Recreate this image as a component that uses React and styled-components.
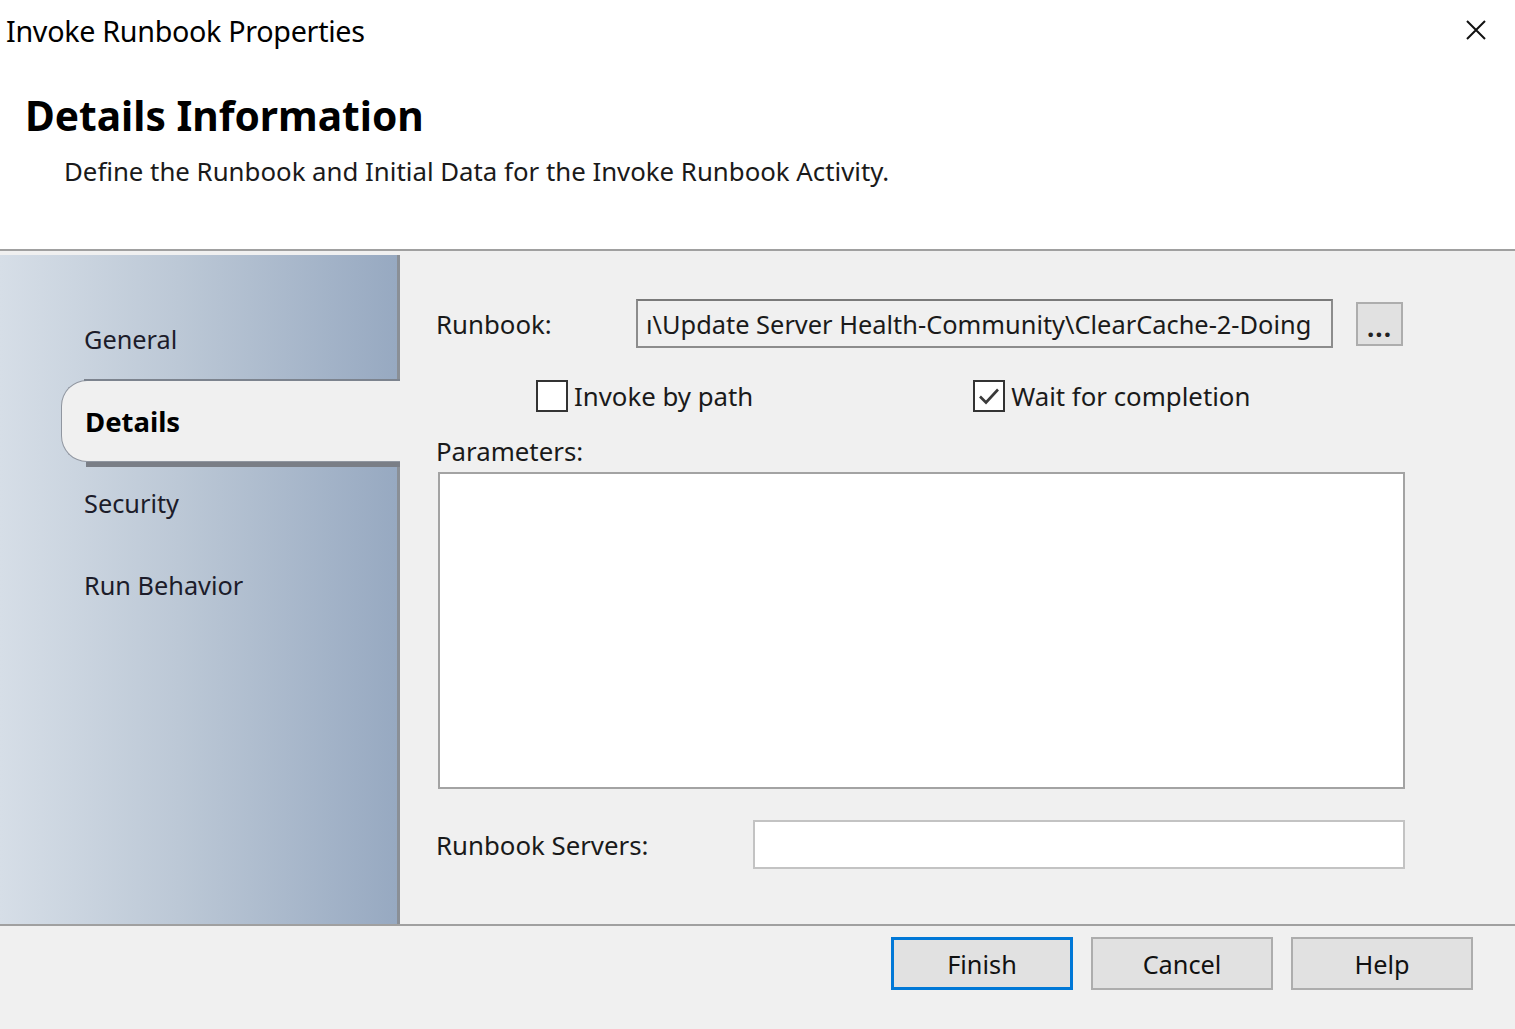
import React from "react";
import styled, { createGlobalStyle } from "styled-components";

const Global = createGlobalStyle`
  html, body { margin: 0; padding: 0; background: #f0f0f0; }
  body { font-family: "Noto Sans", "Open Sans", sans-serif; }
  * { box-sizing: border-box; }
`;

const Window = styled.div`
  width: 1515px;
  height: 1029px;
  display: flex;
  flex-direction: column;
  background: #f0f0f0;
  overflow: hidden;
`;

const TitleBar = styled.div`
  height: 66px;
  background: #fff;
  display: flex;
  align-items: flex-start;
  justify-content: space-between;
  padding: 11px 28px 0 6px;
`;

const TitleText = styled.div`
  font-family: "Noto Sans", "Open Sans", sans-serif;
  font-size: 28.7px;
  color: #000;
  letter-spacing: -0.3px;
`;

const CloseIcon = styled.svg`
  width: 22px;
  height: 22px;
  margin-top: 8px;
`;

const Header = styled.div`
  height: 185px;
  background: #fff;
  padding: 21px 0 0 25px;
  border-bottom: 2px solid #a0a0a0;
`;

const Heading = styled.h1`
  margin: 0;
  font-size: 40.7px;
  font-weight: bold;
  color: #000;
  line-height: 56px;
`;

const Subtitle = styled.div`
  margin: 10px 0 0 39px;
  font-size: 25.8px;
  color: #1a1a1a;
`;

const Main = styled.div`
  height: 675px;
  display: flex;
  padding-top: 4px;
  border-bottom: 2px solid #a0a0a0;
`;

const Sidebar = styled.nav`
  width: 400px;
  flex: none;
  background: linear-gradient(to right, #d6dee7 0%, #bcc8d6 45%, #97a9c1 100%);
  border-right: 3px solid #8a8f96;
  padding-top: 43px;
  display: flex;
  flex-direction: column;
`;

const Tab = styled.div`
  position: relative;
  height: 82px;
  display: flex;
  align-items: center;
  padding-left: ${(p) => (p.$active ? "23px" : "84px")};
  font-size: 25.3px;
  color: #1c1c2a;
  ${(p) =>
    p.$active
      ? `
    margin-left: 61px;
    margin-right: -3px;
    background: #f0f0f0;
    border: 1px solid #9096a0;
    border-right: none;
    border-radius: 26px 0 0 26px;
    font-size: 27.5px;
    font-weight: bold;
    color: #000;
    &::before {
      content: "";
      position: absolute;
      left: 22px;
      right: 0;
      top: -2px;
      height: 2px;
      background: #7c838e;
    }
    &::after {
      content: "";
      position: absolute;
      left: 24px;
      right: 0;
      bottom: -6px;
      height: 5px;
      background: #7a7e86;
    }
  `
      : ""}
`;

const Content = styled.section`
  flex: 1;
  padding: 44px 0 0 36px;
  display: flex;
  flex-direction: column;
`;

const Row = styled.div`
  display: flex;
  align-items: center;
`;

const Label = styled.div`
  font-size: 25.8px;
  color: #1a1a1a;
  width: ${(p) => p.$w || "auto"};
  flex: none;
`;

const PathInput = styled.div`
  width: 697px;
  height: 49px;
  border: 2px solid #8c8c8c;
  border-top-color: #7a7a7a;
  background: #f0f0f0;
  font-size: 25.4px;
  color: #1a1a1a;
  display: flex;
  align-items: center;
  padding-left: 8px;
  white-space: nowrap;
  overflow: hidden;
`;

const BrowseButton = styled.div`
  width: 47px;
  height: 44px;
  margin-left: 23px;
  background: #e1e1e1;
  border: 2px solid #adadad;
  font-size: 26px;
  font-weight: bold;
  display: flex;
  align-items: flex-end;
  justify-content: center;
  padding-bottom: 4px;
  line-height: 1;
  color: #222;
  letter-spacing: 1px;
`;

const CheckRow = styled.div`
  display: flex;
  align-items: center;
  margin-top: 32px;
  height: 32px;
`;

const CheckItem = styled.label`
  display: flex;
  align-items: center;
  gap: 6px;
  font-size: 25.8px;
  color: #1a1a1a;
  margin-left: ${(p) => p.$ml};
`;

const Box = styled.span`
  width: 32px;
  height: 32px;
  border: 2px solid #333;
  background: #fff;
  display: flex;
  align-items: center;
  justify-content: center;
`;

const ParamLabel = styled(Label)`
  margin-top: 21px;
`;

const TextArea = styled.div`
  margin-top: 3px;
  margin-left: 2px;
  width: 967px;
  height: 317px;
  background: #fff;
  border: 2px solid #a3a3a3;
`;

const ServersRow = styled(Row)`
  margin-top: 31px;
`;

const ServersInput = styled.div`
  width: 652px;
  height: 49px;
  background: #fff;
  border: 2px solid #c3c3c3;
`;

const Footer = styled.div`
  flex: 1;
  display: flex;
  justify-content: flex-end;
  align-items: flex-start;
  padding: 11px 42px 0 0;
  gap: 18px;
`;

const Button = styled.div`
  width: 182px;
  height: 53px;
  background: #e1e1e1;
  border: ${(p) => (p.$primary ? "3px solid #0078d7" : "2px solid #adadad")};
  font-size: 25.3px;
  color: #111;
  display: flex;
  align-items: center;
  justify-content: center;
`;

function Check({ checked }) {
  return (
    <Box>
      {checked && (
        <svg width="24" height="24" viewBox="0 0 24 24">
          <path d="M3 12.5 L9 18.5 L21 5.5" fill="none" stroke="#3a3a3a" strokeWidth="2.6" />
        </svg>
      )}
    </Box>
  );
}

export default function App() {
  return (
    <Window>
      <Global />
      <TitleBar>
        <TitleText>Invoke Runbook Properties</TitleText>
        <CloseIcon viewBox="0 0 22 22">
          <path d="M2 2 L20 20 M20 2 L2 20" stroke="#111" strokeWidth="2" />
        </CloseIcon>
      </TitleBar>
      <Header>
        <Heading>Details Information</Heading>
        <Subtitle>Define the Runbook and Initial Data for the Invoke Runbook Activity.</Subtitle>
      </Header>
      <Main>
        <Sidebar>
          <Tab>General</Tab>
          <Tab $active>Details</Tab>
          <Tab>Security</Tab>
          <Tab>Run Behavior</Tab>
        </Sidebar>
        <Content>
          <Row>
            <Label $w="200px">Runbook:</Label>
            <PathInput>ı\Update Server Health-Community\ClearCache-2-Doing</PathInput>
            <BrowseButton>...</BrowseButton>
          </Row>
          <CheckRow>
            <CheckItem $ml="100px">
              <Check />
              Invoke by path
            </CheckItem>
            <CheckItem $ml="220px">
              <Check checked />
              Wait for completion
            </CheckItem>
          </CheckRow>
          <ParamLabel>Parameters:</ParamLabel>
          <TextArea />
          <ServersRow>
            <Label $w="317px">Runbook Servers:</Label>
            <ServersInput />
          </ServersRow>
        </Content>
      </Main>
      <Footer>
        <Button $primary>Finish</Button>
        <Button>Cancel</Button>
        <Button>Help</Button>
      </Footer>
    </Window>
  );
}
